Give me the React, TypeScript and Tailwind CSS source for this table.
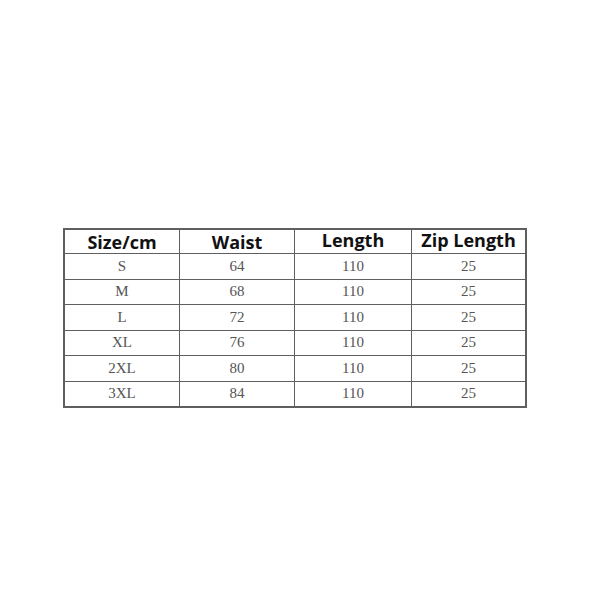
const headers = ["Size/cm", "Waist", "Length", "Zip Length"];

const rows = [
  ["S", "64", "110", "25"],
  ["M", "68", "110", "25"],
  ["L", "72", "110", "25"],
  ["XL", "76", "110", "25"],
  ["2XL", "80", "110", "25"],
  ["3XL", "84", "110", "25"],
];

export default function App() {
  return (
    <div className="w-[600px] h-[600px] bg-white pt-[228px] pl-[63px]">
      {/* size chart */}
      <div className="w-[464px] h-[180px] bg-[#5f5f5f] p-[2px]">
        <div className="grid h-full grid-cols-[114px_114px_116px_1fr] grid-rows-[23px_repeat(6,1fr)] gap-px">
          {headers.map((h, i) => (
            <div
              key={h}
              className={`flex justify-center bg-white font-['Open_Sans',sans-serif] text-[18px] font-bold text-[#111] leading-none ${
                i < 2 ? "items-end pb-[2px]" : "items-start pt-[1px]"
              }`}
            >
              {h}
            </div>
          ))}
          {rows.map((r) =>
            r.map((c, j) => (
              <div
                key={r[0] + j}
                className="flex items-center justify-center bg-white font-['Liberation_Serif',serif] text-[15px] text-[#555] leading-none"
              >
                {c}
              </div>
            ))
          )}
        </div>
      </div>
    </div>
  );
}
